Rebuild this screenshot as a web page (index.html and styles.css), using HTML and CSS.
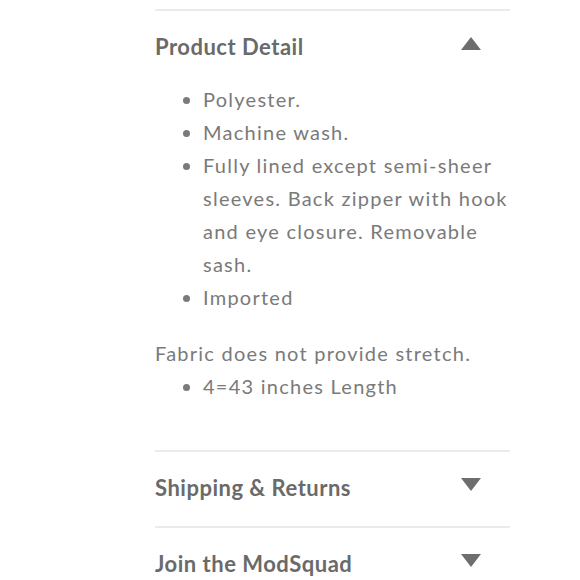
FILE: index.html
```html
<!DOCTYPE html>
<html>
<head>
<meta charset="utf-8">
<link rel="stylesheet" href="styles.css">
</head>
<body>
<div class="accordion">
  <section class="panel open">
    <div class="head">
      <h2 class="title">Product Detail</h2>
      <span class="tri up"></span>
    </div>
    <div class="body">
      <ul class="list">
        <li>Polyester.</li>
        <li>Machine wash.</li>
        <li>Fully lined except semi-sheer sleeves. Back zipper with hook and eye closure. Removable sash.</li>
        <li>Imported</li>
      </ul>
      <p class="note">Fabric does not provide stretch.</p>
      <ul class="list">
        <li>4=43 inches Length</li>
      </ul>
    </div>
  </section>
  <section class="panel">
    <div class="head">
      <h2 class="title">Shipping &amp; Returns</h2>
      <span class="tri down"></span>
    </div>
  </section>
  <section class="panel">
    <div class="head">
      <h2 class="title">Join the ModSquad</h2>
      <span class="tri down"></span>
    </div>
  </section>
</div>
</body>
</html>
```
FILE: styles.css
```css
html, body {
  margin: 0;
  padding: 0;
  background: #fff;
}
body {
  font-family: "Lato", "Liberation Sans", sans-serif;
  color: #7a7a7a;
}
.accordion {
  width: 355px;
  margin-left: 155px;
  padding-top: 9px;
}
.panel {
  border-top: 2px solid #ebebeb;
}
.head {
  box-sizing: border-box;
  display: flex;
  align-items: center;
  justify-content: space-between;
  height: 74px;
  padding: 0 29px 4px 0;
}
.title {
  margin: 0;
  font-size: 22px;
  font-weight: 700;
  color: #6a6a6a;
  letter-spacing: 0.5px;
}
.tri {
  width: 0;
  height: 0;
  border-left: 10px solid transparent;
  border-right: 10px solid transparent;
  margin-bottom: 6px;
}
.tri.up {
  border-bottom: 13px solid #6e6e6e;
}
.tri.down {
  border-top: 13px solid #6e6e6e;
}
.body {
  margin-top: -2px;
  padding-bottom: 47px;
}
.list {
  margin: 0;
  padding-left: 48px;
  font-size: 20px;
  line-height: 33px;
  letter-spacing: 1.25px;
}
.note {
  margin: 23px 0 0;
  font-size: 20px;
  line-height: 33px;
  letter-spacing: 1.25px;
}
```
